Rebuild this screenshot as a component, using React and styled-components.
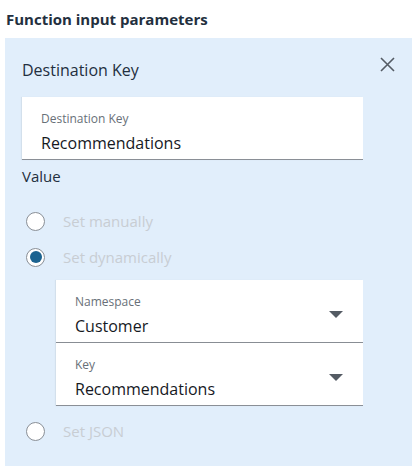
import styled, { createGlobalStyle } from "styled-components";

const GlobalStyle = createGlobalStyle`
  body {
    margin: 0;
    background: #ffffff;
    font-family: "Open Sans", "Noto Sans", sans-serif;
    color: #16191f;
  }
`;

const Page = styled.div`
  padding: 9px 2px 4px 5px;
`;

const Title = styled.h2`
  margin: 0 0 8px 1px;
  font-size: 15px;
  line-height: 21px;
  font-weight: 700;
  color: #232f3e;
`;

const Panel = styled.section`
  background: #e1eefb;
  padding: 20px 17px 17px 17px;
  display: flex;
  flex-direction: column;
`;

const Header = styled.div`
  display: flex;
  justify-content: space-between;
  align-items: flex-start;
  margin-bottom: 15px;
`;

const Heading = styled.h3`
  margin: 0;
  font-size: 16px;
  line-height: 24px;
  font-weight: 500;
  color: #232f3e;
`;

const CloseButton = styled.button`
  background: none;
  border: none;
  padding: 0;
  margin-top: -2px;
  width: 16px;
  height: 16px;
  display: flex;
  align-items: center;
  justify-content: center;
  color: #545b64;
`;

const Field = styled.div`
  background: #ffffff;
  border-bottom: 1px solid #8a8f96;
  box-shadow: -1px 0 1px rgba(0, 0, 0, 0.06);
  padding: 13px 20px 6px 19px;
  display: flex;
  align-items: center;
  justify-content: space-between;
  max-width: ${(p) => p.$width}px;
  box-sizing: border-box;
  height: ${(p) => p.$height || 63}px;
`;

const FieldText = styled.div`
  display: flex;
  flex-direction: column;
  gap: 5px;
  margin-top: 1px;
`;

const FieldLabel = styled.span`
  font-size: 12px;
  line-height: 16px;
  color: #687078;
`;

const FieldValue = styled.span`
  font-size: 16px;
  line-height: 22px;
  color: #16191f;
`;

const SectionLabel = styled.div`
  margin-top: 6px;
  font-size: 15px;
  line-height: 20px;
  font-weight: 500;
  color: #232f3e;
`;

const RadioRow = styled.label`
  display: flex;
  align-items: center;
  height: 36px;
  margin-top: ${(p) => p.$top || 0}px;
  padding-left: 4px;
  gap: 18px;
`;

const RadioCircle = styled.span`
  width: 19px;
  height: 19px;
  border-radius: 50%;
  box-sizing: border-box;
  border: 1.5px solid #8a8f96;
  background: #ffffff;
  display: flex;
  align-items: center;
  justify-content: center;

  &::after {
    content: "";
    display: ${(p) => (p.$checked ? "block" : "none")};
    width: 12px;
    height: 12px;
    border-radius: 50%;
    background: #1c6390;
  }
`;

const RadioText = styled.span`
  font-size: 15px;
  line-height: 20px;
  color: #c8cdd3;
`;

const Nested = styled.div`
  margin: 5px 0 0 34px;
  display: flex;
  flex-direction: column;
  max-width: 307px;
`;

const Caret = () => (
  <svg width="14" height="8" viewBox="0 0 14 8">
    <path d="M0 0 H14 L7 7 Z" fill="#545b64" />
  </svg>
);

const CloseIcon = () => (
  <svg width="15" height="15" viewBox="0 0 15 15">
    <path d="M1 1 L14 14 M14 1 L1 14" stroke="#545b64" strokeWidth="1.6" fill="none" />
  </svg>
);

const Dropdown = ({ label, value }) => (
  <Field $width={307}>
    <FieldText>
      <FieldLabel>{label}</FieldLabel>
      <FieldValue>{value}</FieldValue>
    </FieldText>
    <Caret />
  </Field>
);

const Radio = ({ label, checked, top }) => (
  <RadioRow $top={top}>
    <RadioCircle $checked={checked} />
    <RadioText>{label}</RadioText>
  </RadioRow>
);

export default function App() {
  return (
    <>
      <GlobalStyle />
      <Page>
        <Title>Function input parameters</Title>
        <Panel>
          <Header>
            <Heading>Destination Key</Heading>
            <CloseButton aria-label="Close">
              <CloseIcon />
            </CloseButton>
          </Header>
          <Field $width={341}>
            <FieldText>
              <FieldLabel>Destination Key</FieldLabel>
              <FieldValue>Recommendations</FieldValue>
            </FieldText>
          </Field>
          <SectionLabel>Value</SectionLabel>
          <Radio label="Set manually" top={17} />
          <Radio label="Set dynamically" checked />
          <Nested>
            <Dropdown label="Namespace" value="Customer" />
            <Dropdown label="Key" value="Recommendations" />
          </Nested>
          <Radio label="Set JSON" top={7} />
        </Panel>
      </Page>
    </>
  );
}
